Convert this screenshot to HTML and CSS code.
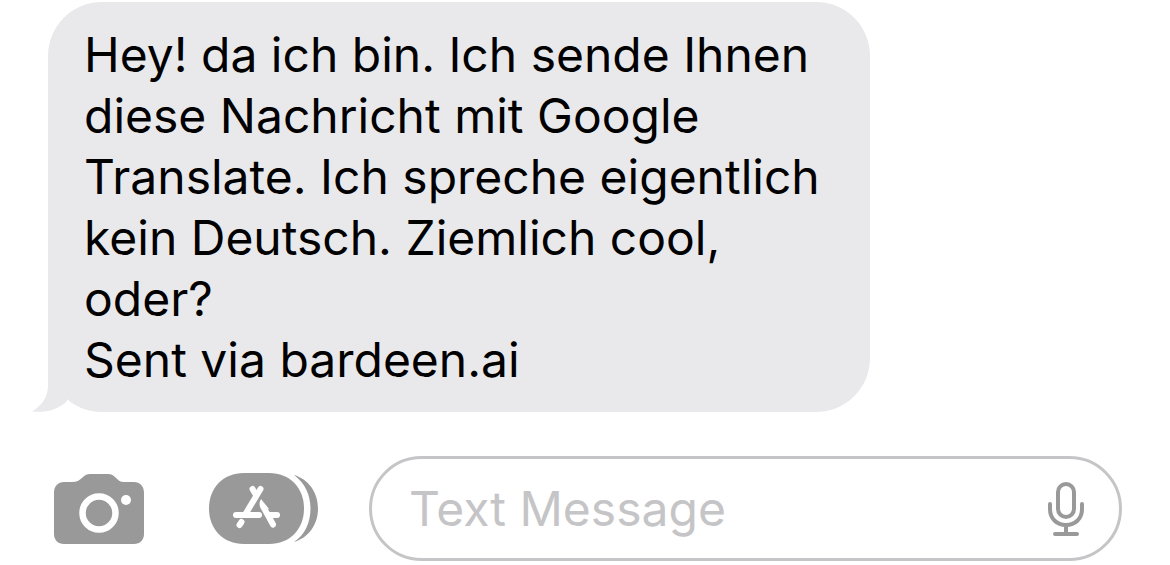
FILE: index.html
```html
<!DOCTYPE html>
<html lang="de">
<head>
    <meta charset="UTF-8">
    <meta name="viewport" content="width=device-width, initial-scale=1.0">
    <title>Messages</title>
    <link rel="stylesheet" href="styles.css">
</head>
<body>

<main class="chat">
    <div class="bubble">
        <p class="bubble-text">Hey! da ich bin. Ich sende Ihnen diese Nachricht mit Google Translate. Ich spreche eigentlich kein Deutsch. Ziemlich cool, oder?<br>Sent via bardeen.ai</p>
        <svg class="bubble-tail" width="36" height="56" viewBox="0 0 36 56" aria-hidden="true">
            <path fill="#e9e9eb" d="M16 0V30C16 40 10 50 0 55.5C13 57 26 54 35 45L36 20Z"/>
        </svg>
    </div>
</main>

<form class="composer">
    <button type="button" class="icon-button camera" aria-label="Camera">
        <svg width="90" height="70" viewBox="0 0 90 70">
            <path fill="#999" d="M10 8H18C23 8 26 6 29 3C31 1 33 0 36 0H54C57 0 59 1 61 3C64 6 66 8 70 8H80C86 8 90 12 90 19V60C90 66 86 70 80 70H10C4 70 0 66 0 60V19C0 12 4 8 10 8Z"/>
            <circle cx="45" cy="39" r="16.5" fill="none" stroke="#fff" stroke-width="6.5"/>
            <circle cx="72" cy="26" r="5" fill="#fff"/>
        </svg>
    </button>
    <button type="button" class="icon-button apps" aria-label="Apps">
        <svg width="109" height="71" viewBox="0 0 109 71">
            <path fill="#999" d="M35 0H60C81 0 95 15 95 35.5C95 56 81 71 60 71H35C14 71 0 56 0 35.5C0 15 14 0 35 0Z"/>
            <path fill="#999" d="M85 2C99 6 109 19 109 35.5C109 52 99 65 85 69C96 62 101.5 49 101.5 35.5C101.5 22 96 10 85 2Z"/>
            <g fill="none" stroke="#fff" stroke-width="6" stroke-linecap="round">
                <path d="M51.5 16L36.500 41"/>
                <path d="M43.5 16L47 22"/>
                <path d="M27 42H50"/>
                <path d="M61 42H68"/>
                <path d="M55 35L64 51.5"/>
                <path d="M32.5 49L30.5 52"/>
            </g>
            <path fill="#fff" d="M52 26C50 29 50 33 52 36L60 36Z"/>
        </svg>
    </button>
    <div class="field">
        <input type="text" class="field-input" placeholder="Text Message" aria-label="Text Message">
        <button type="button" class="icon-button" aria-label="Dictate">
            <svg width="36" height="54" viewBox="0 0 36 54" fill="none" stroke="#999" stroke-width="4" stroke-linecap="round">
                <rect x="10" y="2" width="16" height="33" rx="8"/>
                <path d="M2 22V27C2 37 9 43 18 43C27 43 34 37 34 27V22M18 43V52M7 52H29"/>
            </svg>
        </button>
    </div>
</form>

</body>
</html>
```
FILE: styles.css
```css
body {
    font-family: Inter, "Liberation Sans", sans-serif;
    font-size: 48px;
    margin: 0;
    padding: 2px 48px 0;
    background-color: #fff;
    color: #000;
}
.chat {
    display: flex;
    margin-bottom: 44px;
}
.bubble {
    position: relative;
    box-sizing: border-box;
    width: 822px;
    max-width: 100%;
    padding: 22px 36px;
    background-color: #e9e9eb;
    border-radius: 54px;
}
.bubble-text {
    margin: 0;
    line-height: 61px;
}
.bubble-tail {
    position: absolute;
    left: -16px;
    bottom: 0;
}
.composer {
    display: flex;
    align-items: center;
    padding-left: 6px;
}
.icon-button {
    flex: none;
    padding: 0;
    border: none;
    background: none;
    cursor: pointer;
}
.icon-button svg {
    display: block;
}
.camera {
    margin-right: 65px;
}
.apps {
    margin-right: 51px;
}
.field {
    flex: 1;
    display: flex;
    align-items: center;
    box-sizing: border-box;
    height: 105px;
    min-width: 0;
    padding: 0 35px 0 37px;
    border: 3px solid #c5c5c7;
    border-radius: 53px;
}
.field-input {
    flex: 1;
    min-width: 0;
    padding: 0;
    border: none;
    outline: none;
    background: none;
    font: inherit;
}
.field-input::placeholder {
    color: #c5c5c7;
    opacity: 1;
}
```
